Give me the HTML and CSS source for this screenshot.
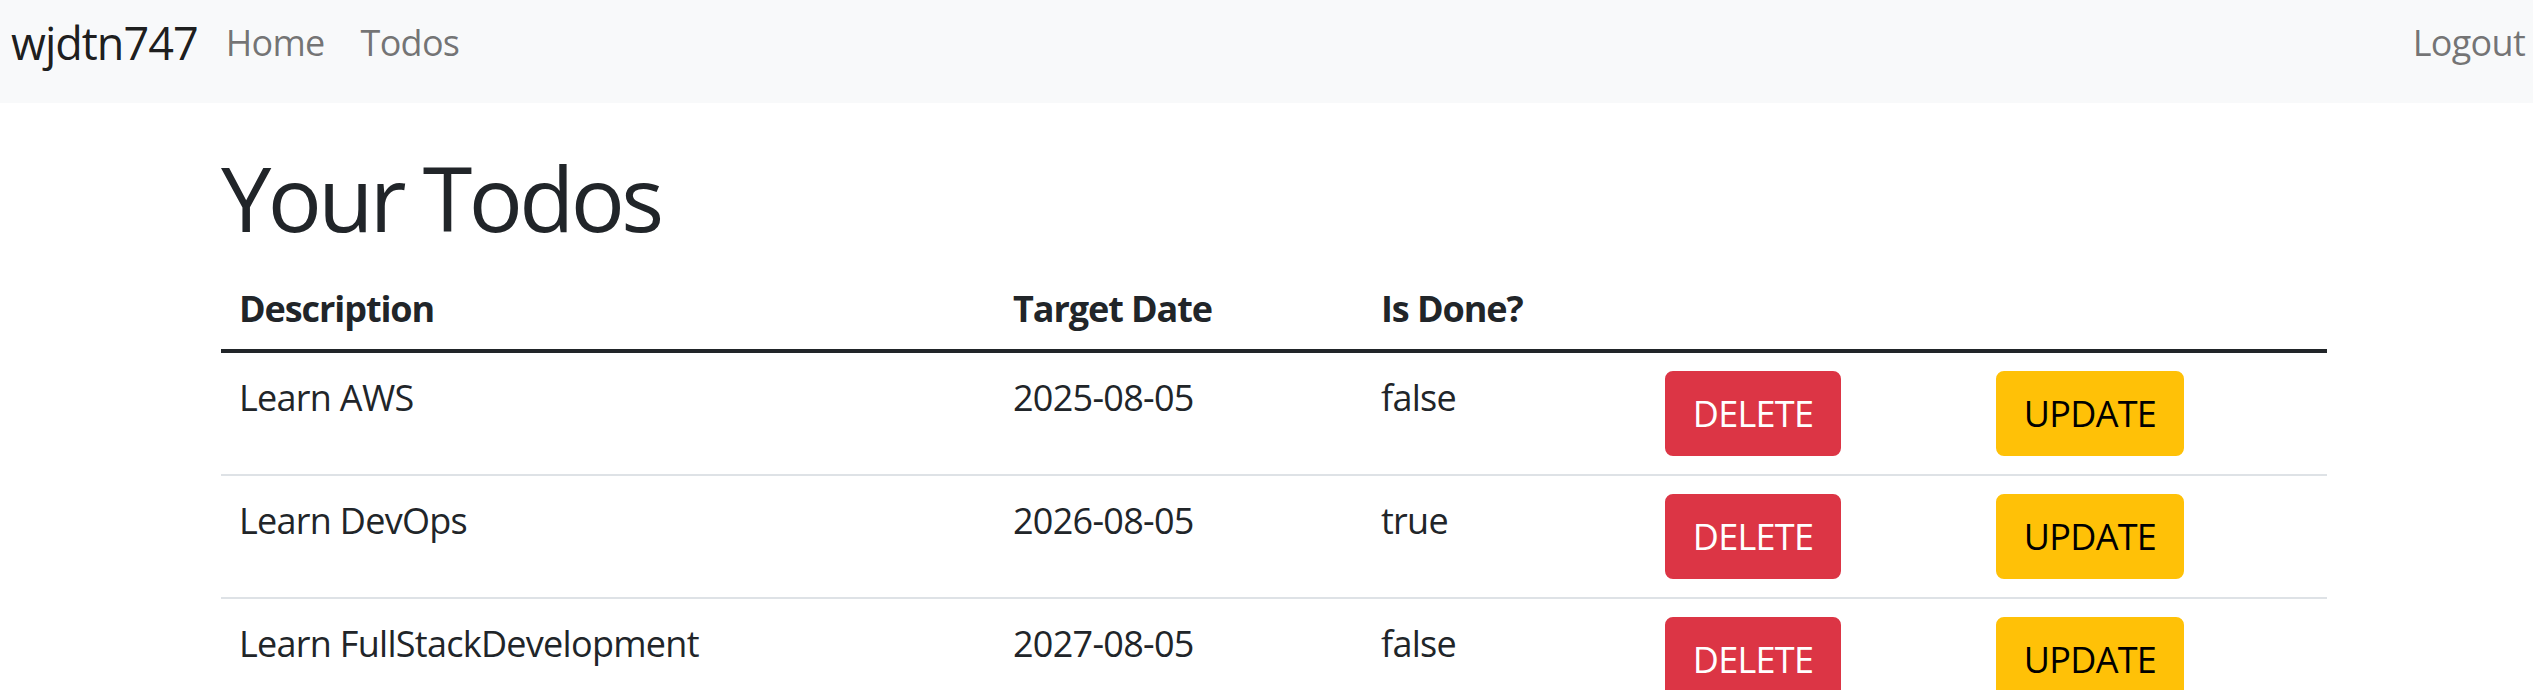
FILE: index.html
```html
<!DOCTYPE html>
<html lang="en">
<head>
<meta charset="utf-8">
<title>Todos</title>
<link rel="stylesheet" href="styles.css">
</head>
<body>
<nav class="navbar">
  <a class="brand" href="#">wjdtn747</a>
  <ul class="nav-links">
    <li><a class="nav-link" href="#">Home</a></li>
    <li><a class="nav-link" href="#">Todos</a></li>
  </ul>
  <ul class="nav-links nav-right">
    <li><a class="nav-link" href="#">Logout</a></li>
  </ul>
</nav>
<main class="container">
  <h1 class="page-title">Your Todos</h1>
  <table class="todo-table">
    <colgroup>
      <col class="col-desc">
      <col class="col-date">
      <col class="col-done">
      <col class="col-del">
      <col class="col-upd">
    </colgroup>
    <thead>
      <tr>
        <th>Description</th>
        <th>Target Date</th>
        <th>Is Done?</th>
        <th></th>
        <th></th>
      </tr>
    </thead>
    <tbody>
      <tr>
        <td>Learn AWS</td>
        <td>2025-08-05</td>
        <td>false</td>
        <td><a class="btn btn-delete" href="#">DELETE</a></td>
        <td><a class="btn btn-update" href="#">UPDATE</a></td>
      </tr>
      <tr>
        <td>Learn DevOps</td>
        <td>2026-08-05</td>
        <td>true</td>
        <td><a class="btn btn-delete" href="#">DELETE</a></td>
        <td><a class="btn btn-update" href="#">UPDATE</a></td>
      </tr>
      <tr>
        <td>Learn FullStackDevelopment</td>
        <td>2027-08-05</td>
        <td>false</td>
        <td><a class="btn btn-delete" href="#">DELETE</a></td>
        <td><a class="btn btn-update" href="#">UPDATE</a></td>
      </tr>
    </tbody>
  </table>
</main>
</body>
</html>
```

FILE: styles.css
```css
* {
  box-sizing: border-box;
}

body {
  margin: 0;
  font-family: "Open Sans", "Noto Sans", sans-serif;
  color: #212529;
  background: #ffffff;
}

a {
  text-decoration: none;
}

.navbar {
  display: flex;
  align-items: center;
  height: 103px;
  padding: 0 8px 17px 11px;
  background: #f8f9fa;
}

.brand {
  font-size: 45px;
  line-height: 1.5;
  letter-spacing: -0.022em;
  color: rgba(0, 0, 0, 0.9);
  margin-right: 28px;
}

.nav-links {
  display: flex;
  gap: 36px;
  margin: 0;
  padding: 0;
  list-style: none;
}

.nav-right {
  margin-left: auto;
}

.nav-link {
  font-size: 36px;
  line-height: 1.5;
  letter-spacing: -0.02em;
  color: rgba(0, 0, 0, 0.55);
}

.container {
  width: 2106px;
  margin-left: 221px;
}

.page-title {
  margin: 40px 0 14px;
  font-size: 90px;
  font-weight: 400;
  line-height: 1.2;
  letter-spacing: -0.04em;
}

.todo-table {
  width: 100%;
  table-layout: fixed;
  border-collapse: collapse;
  font-size: 36px;
  line-height: 1.5;
  letter-spacing: -0.02em;
}

.col-desc { width: 774px; }
.col-date { width: 368px; }
.col-done { width: 284px; }
.col-del { width: 331px; }
.col-upd { width: 349px; }

.todo-table th {
  text-align: left;
  font-weight: 700;
  letter-spacing: -0.03em;
  padding: 17px 18px 13px;
  vertical-align: bottom;
}

.todo-table thead {
  border-bottom: 4px solid #212529;
}

.todo-table td {
  padding: 18px;
  vertical-align: top;
  border-bottom: 2px solid #dee2e6;
}

.btn {
  display: inline-block;
  height: 85px;
  padding: 13.5px 0;
  border: 2px solid transparent;
  border-radius: 8px;
  font-size: 36px;
  line-height: 54px;
  letter-spacing: -0.02em;
  text-align: center;
}

.btn-delete {
  width: 176px;
  background: #dc3545;
  border-color: #dc3545;
  color: #ffffff;
}

.btn-update {
  width: 188px;
  background: #ffc107;
  border-color: #ffc107;
  color: #000000;
}
```
